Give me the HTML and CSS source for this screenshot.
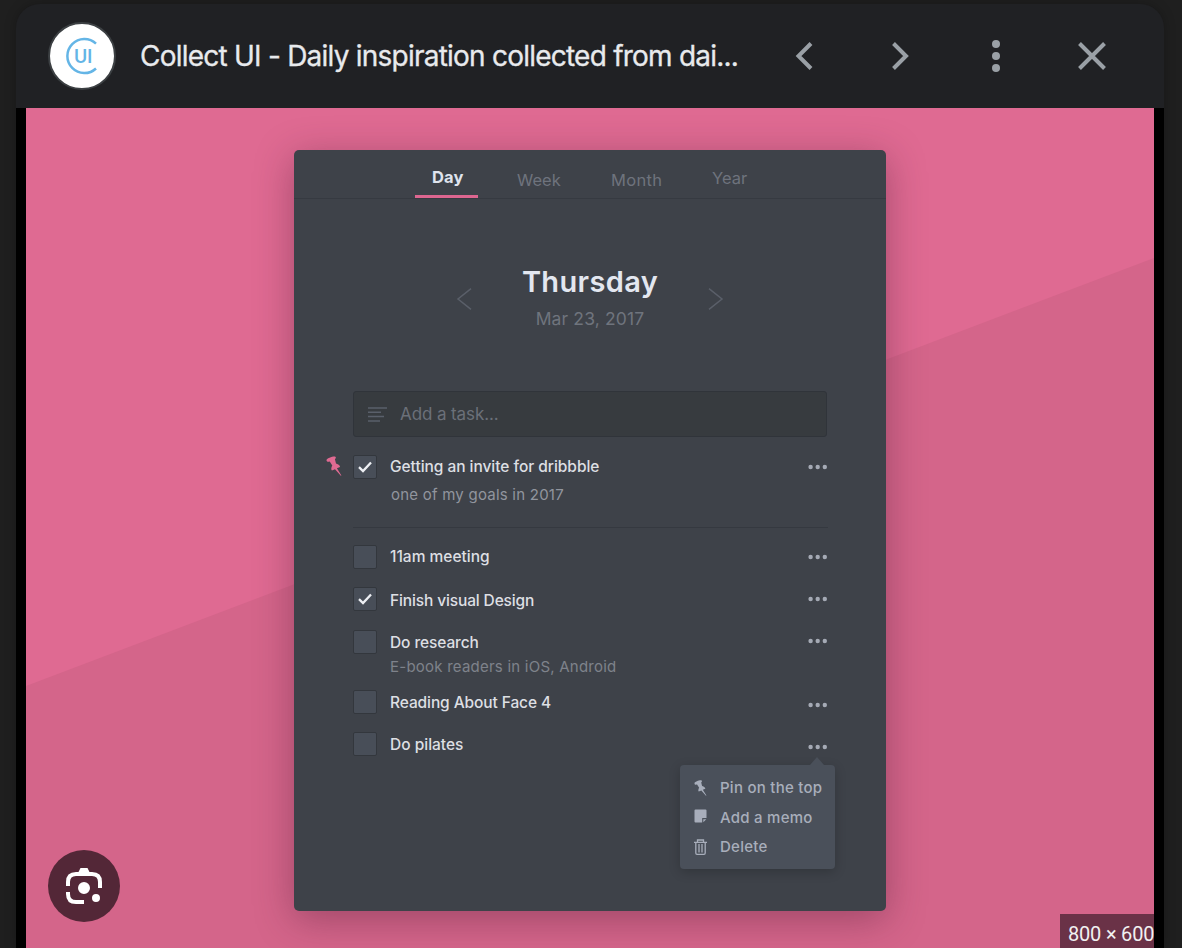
FILE: index.html
```html
<!DOCTYPE html>
<html lang="en">
<head>
<meta charset="utf-8">
<title>Collect UI</title>
<link rel="stylesheet" href="styles.css">
</head>
<body>
<svg class="defs" width="0" height="0">
  <symbol id="pin" viewBox="0 0 16 20"><path d="M.5 4.6C.2 3.3 1.700 2.300 3.500 1.700C5.800.700 8.500.100 9.400.700C10.500 1.500 9.500 2.500 8.900 3.100L10 7.400C12.500 8.100 14.200 9.700 14 11L10.900 12.300L15.400 19.500L14.800 19.800L9 13.200L5.900 14.400C4.800 13.700 5.300 11.300 6.300 9.600L3.700 5.600C2.200 6 .8 5.900.5 4.600Z"/></symbol>
  <symbol id="check" viewBox="0 0 14 12"><path d="M1 6.200L5 10L13 1.500" fill="none" stroke="currentColor" stroke-width="2.300"/></symbol>
  <symbol id="dots" viewBox="0 0 20 6"><circle cx="2.600" cy="3" r="2.200"/><circle cx="9.700" cy="3" r="2.200"/><circle cx="16.800" cy="3" r="2.200"/></symbol>
</svg>
<div class="panel">
  <header class="head">
    <div class="logo"><svg width="34" height="38" viewBox="0 0 34 38"><path d="M31 6.700A17 17 0 1 0 31 31.500" fill="none" stroke="#64b5e6" stroke-width="2.500"/></svg><span class="logo-text">UI</span></div>
    <h1 class="title">Collect UI - Daily inspiration collected from dai...</h1>
    <nav class="tools">
      <svg width="32" height="32" viewBox="0 0 32 32"><path d="M23 3.500L10.500 16L23 28.500" /></svg>
      <svg width="32" height="32" viewBox="0 0 32 32"><path d="M9.500 3.500L22 16L9.500 28.500" /></svg>
      <svg class="solid" width="32" height="32" viewBox="0 0 32 32"><circle cx="16" cy="4" r="4"/><circle cx="16" cy="16" r="4"/><circle cx="16" cy="28" r="4"/></svg>
      <svg width="32" height="32" viewBox="0 0 32 32"><path d="M3.500 3.500L28.500 28.500M28.500 3.500L3.500 28.500" /></svg>
    </nav>
  </header>
  <main class="stage">
    <div class="art">
      <section class="card">
        <div class="tabs"><span class="tab active">Day</span><span class="tab week">Week</span><span class="tab month">Month</span><span class="tab year">Year</span></div>
        <div class="date">
          <svg width="16" height="22" viewBox="0 0 16 22"><path d="M15 .7L2 11L15 21.300"/></svg>
          <div class="date-text"><h2 class="weekday">Thursday</h2><p class="full">Mar 23, 2017</p></div>
          <svg width="16" height="22" viewBox="0 0 16 22"><path d="M1 .7L14 11L1 21.300"/></svg>
        </div>
        <div class="add"><svg width="19" height="15" viewBox="0 0 19 15"><path d="M0 1H19M0 5.300H13M0 9.600H16M0 14H12"/></svg><span class="ph">Add a task...</span></div>
        <ul class="list">
          <li class="row pinned"><svg class="pin" width="16" height="20"><use href="#pin"/></svg><span class="box"><svg width="14" height="12"><use href="#check"/></svg></span><div class="text"><p class="name t1">Getting an invite for dribbble</p><p class="note n1">one of my goals in 2017</p></div><svg class="dots" width="20" height="6"><use href="#dots"/></svg></li>
          <li class="row r42"><span class="box"></span><div class="text"><p class="name t2">11am meeting</p></div><svg class="dots" width="20" height="6"><use href="#dots"/></svg></li>
          <li class="row r43 drop"><span class="box"><svg width="14" height="12"><use href="#check"/></svg></span><div class="text"><p class="name t3">Finish visual Design</p></div><svg class="dots" width="20" height="6"><use href="#dots"/></svg></li>
          <li class="row r60 raised"><span class="box"></span><div class="text"><p class="name t4">Do research</p><p class="note dim n2">E-book readers in iOS, Android</p></div><svg class="dots" width="20" height="6"><use href="#dots"/></svg></li>
          <li class="row r42 low"><span class="box"></span><div class="text"><p class="name t5">Reading About Face 4</p></div><svg class="dots" width="20" height="6"><use href="#dots"/></svg></li>
          <li class="row r42 low"><span class="box"></span><div class="text"><p class="name t6">Do pilates</p></div><svg class="dots" width="20" height="6"><use href="#dots"/></svg>
            <div class="menu">
              <div class="item"><svg width="13" height="16" viewBox="0 0 16 20"><use href="#pin"/></svg><span class="m1">Pin on the top</span></div>
              <div class="item"><svg width="13" height="16" viewBox="0 0 13 16"><path d="M1.500.5H11.500Q12.500.5 12.500 1.500V9H8.200V13.500H1.500Q.5 13.500.5 12.500V1.500Q.5.500 1.500.500ZM9.300 10.200H12.300L9.300 13.200Z"/></svg><span class="m2">Add a memo</span></div>
              <div class="item"><svg width="13" height="16" viewBox="0 0 13 16"><path d="M0 3.300H13M3.500 3V1H9.500V3M1.800 3.500V14Q1.800 15.300 3 15.300H10Q11.200 15.300 11.200 14V3.500M5 5V13.500M8 5V13.500" fill="none" stroke="#a8aebb" stroke-width="1.300"/></svg><span class="m3">Delete</span></div>
            </div>
          </li>
        </ul>
      </section>
      <div class="lens"><svg width="36" height="36" viewBox="0 0 36 36"><path d="M2 18V14Q2 6 10 6H26Q34 6 34 14V20M2 24V26Q2 34 10 34H18" fill="none" stroke="#fff" stroke-width="4"/><path d="M12 5L14.500 0H21.500L24 5ZM18 14A6 6 0 1 0 18 26A6 6 0 1 0 18 14M30 26A4 4 0 1 0 30 34A4 4 0 1 0 30 26" fill="#fff"/></svg></div>
      <div class="size">800 × 600</div>
    </div>
  </main>
</div>
</body>
</html>
```
FILE: styles.css
```css
* { box-sizing: border-box; }
body { margin: 0; width: 1182px; height: 948px; overflow: hidden; background: #1f1f1f; font-family: Inter, "Liberation Sans", sans-serif; padding: 4px 18px 0 16px; }
h1, h2, p, ul { margin: 0; padding: 0; }
svg { display: block; flex: none; }
.defs { position: absolute; }
.panel { height: 944px; background: #202124; border-radius: 24px 24px 0 0; box-shadow: 0 0 12px rgba(0,0,0,.25); }
.head { height: 104px; display: flex; align-items: center; padding: 0 0 0 32px; }
.logo { width: 68px; height: 68px; border-radius: 50%; background: #fff; border: 2px solid #3c4043; position: relative; display: flex; align-items: center; justify-content: center; }
.logo-text { position: absolute; left: 24px; top: 21px; font-size: 18px; line-height: 24px; font-weight: 600; color: #64b5e6; }
.title { margin-left: 24px; width: 632px; white-space: nowrap; font-size: 28px; line-height: 36px; font-weight: 400; letter-spacing: -.77px; color: #e8eaed; -webkit-text-stroke: .3px #e8eaed; }
.tools { display: flex; gap: 64px; margin-left: 16px; }
.tools svg { fill: none; stroke: #9aa0a6; stroke-width: 4; overflow: visible; }
.tools .solid { fill: #9aa0a6; stroke: none; }
.stage { background: #000; padding: 0 10px; height: 840px; }
.art { position: relative; height: 840px; background: #df6a92; padding: 42px 268px 0; overflow: hidden; z-index: 0; }
.art::before { content: ""; position: absolute; inset: 0; z-index: -1; background: #d4658a; clip-path: polygon(0 578px, 100% 150px, 100% 100%, 0 100%); }
.card { height: 761px; width: 592px; border-radius: 5px; background: #3e4249; box-shadow: 0 8px 38px rgba(75,25,50,.4); }
.tabs { height: 49px; border-bottom: 1px solid #363a41; display: flex; padding-left: 121px; font-size: 16.500px; line-height: 20px; color: #6e737d; white-space: nowrap; }
.tab { padding-top: 20px; }
.active { width: 63px; height: 48px; border-bottom: 3px solid #dd6690; padding: 17px 0 0 17px; font-weight: 700; color: #dfe3ed; letter-spacing: .2px; }
.week { margin-left: 39px; width: 94px; }
.month { width: 101px; letter-spacing: .3px; }
.year { padding-top: 18px; }
.date { display: flex; height: 192px; padding: 65px 162px 0 162px; justify-content: space-between; }
.date svg { margin-top: 24px; fill: none; stroke: #5a5f69; stroke-width: 1.500; }
.date-text { text-align: center; }
.weekday { font-size: 29px; line-height: 36px; font-weight: 600; letter-spacing: .35px; color: #e3e7f0; }
.full { font-size: 17.500px; line-height: 24px; margin-top: 7px; letter-spacing: .15px; color: #6f747d; }
.add { margin: 0 59px; width: 474px; height: 46px; border: 1px solid #30343a; border-radius: 3px; background: #373b3f; display: flex; align-items: center; padding-left: 14px; gap: 13px; font-size: 17px; letter-spacing: -.1px; color: #6b7079; }
.add svg { fill: none; stroke: #5a606b; stroke-width: 1.500; }
.list { list-style: none; margin: 18px 58px 0 59px; }
.row { position: relative; display: flex; align-items: flex-start; }
.pinned { height: 73px; border-bottom: 1px solid #353940; margin-bottom: 17px; }
.r42 { height: 42px; } .r43 { height: 43px; } .r60 { height: 60px; }
.box { width: 24px; height: 24px; flex: none; border: 1px solid #33373d; border-radius: 2px; background: #484e58; color: #eef0f4; display: flex; align-items: center; justify-content: center; }
.text { margin-left: 13px; flex: 1; white-space: nowrap; }
.name { font-size: 15.500px; line-height: 24px; color: #dddfe3; font-weight: 500; }
.t1 { letter-spacing: -.04px; }
.t3 { letter-spacing: -.13px; }
.t4, .t5 { letter-spacing: -.1px; }
.drop .text { padding-top: 2px; }
.raised .text, .low .text { padding-top: 1px; }
.note { font-size: 15px; line-height: 24px; color: #91959e; letter-spacing: .23px; }
.dim { color: #7e828b; }
.n1 { margin: 4px 0 0 1px; }
.dots { fill: #a5aab5; margin-top: 9px; }
.raised .dots { margin-top: 8px; }
.low .dots { margin-top: 12px; }
.pin { position: absolute; left: -27px; top: 1px; fill: #df6a92; }
.menu { position: absolute; left: 327px; top: 33px; width: 155px; height: 104px; border-radius: 4px; background: #4a505a; box-shadow: 0 3px 12px rgba(0,0,0,.2); padding: 8px 14px; color: #a8aebb; font-size: 15px; font-weight: 500; line-height: 29.500px; letter-spacing: .25px; white-space: nowrap; }
.menu::before { content: ""; position: absolute; right: 11px; top: -8px; border: 7px solid transparent; border-top: 0; border-bottom: 8px solid #4a505a; }
.item { display: flex; align-items: center; gap: 13px; height: 29.500px; fill: #a8aebb; }
.lens { position: absolute; left: 22px; top: 742px; width: 72px; height: 72px; border-radius: 50%; background: #532737; display: flex; align-items: center; justify-content: center; }
.size { position: absolute; left: 1034px; top: 806px; width: 94px; height: 34px; background: #6a3247; color: #f1f1f1; font: 20px/40px Roboto, sans-serif; letter-spacing: -.2px; padding-left: 8px; white-space: nowrap; }
```
